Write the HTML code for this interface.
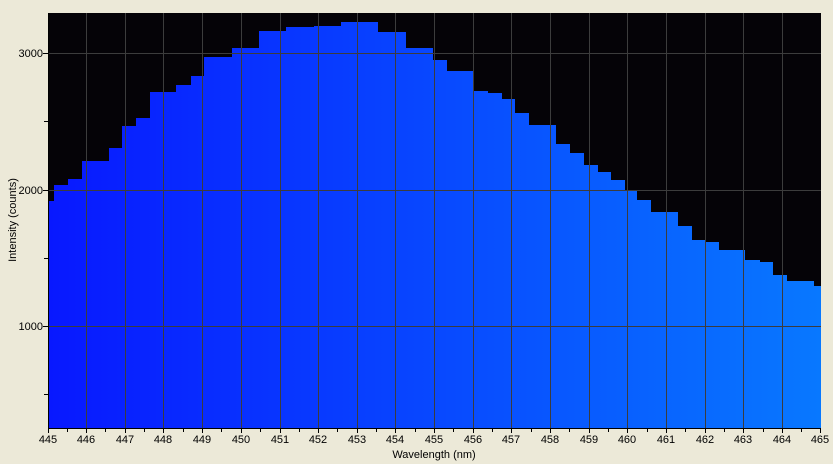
<!DOCTYPE html>
<html><head><style>
html,body{margin:0;padding:0;background:#ece9d8;}
svg{display:block}
text{font-family:"Liberation Sans",sans-serif;font-size:11px;fill:#000}
</style></head><body>
<svg width="833" height="464" viewBox="0 0 833 464" xmlns="http://www.w3.org/2000/svg">
<defs>
<linearGradient id="g" x1="48" y1="0" x2="821" y2="0" gradientUnits="userSpaceOnUse">
<stop offset="0" stop-color="#0818ff"/>
<stop offset="0.5" stop-color="#0848ff"/>
<stop offset="1" stop-color="#0878ff"/>
</linearGradient>
</defs>
<rect x="48" y="13" width="773" height="415" fill="#050307"/>
<path fill="url(#g)" d="M48 428 V201 H54 V185 H68 V179 H82 V161 H109 V148 H122 V126 H136 V118 H150 V92 H176 V85 H191 V76 H204 V57 H232 V48 H259 V31 H286 V27 H314 V26 H341 V22 H378 V32 H406 V48 H433 V60 H447 V71 H473 V91 H488 V93 H502 V99 H515 V113 H529 V125 H556 V144 H570 V153 H584 V165 H598 V172 H611 V180 H625 V190 H637 V200 H651 V212 H678 V226 H692 V240 H706 V242 H719 V250 H745 V260 H760 V262 H773 V275 H787 V281 H814 V286 H821 V428 Z"/>
<g stroke="#3c3c3c" stroke-width="1">
<path d="M86.5 13V428M125.5 13V428M163.5 13V428M202.5 13V428M241.5 13V428M280.5 13V428M318.5 13V428M357.5 13V428M395.5 13V428M434.5 13V428M473.5 13V428M511.5 13V428M550.5 13V428M589.5 13V428M627.5 13V428M666.5 13V428M705.5 13V428M743.5 13V428M782.5 13V428"/>
<path d="M48 53.5H821M48 190.5H821M48 326.5H821"/>
</g>
<g stroke="#000" stroke-width="1">
<path d="M48 428.5H821M48.5 13V428"/>
<path d="M48.5 428V433M67.5 428V432M86.5 428V433M105.5 428V432M125.5 428V433M144.5 428V432M163.5 428V433M183.5 428V432M202.5 428V433M221.5 428V432M241.5 428V433M260.5 428V432M280.5 428V433M299.5 428V432M318.5 428V433M337.5 428V432M357.5 428V433M376.5 428V432M395.5 428V433M415.5 428V432M434.5 428V433M453.5 428V432M473.5 428V433M492.5 428V432M511.5 428V433M531.5 428V432M550.5 428V433M569.5 428V432M589.5 428V433M608.5 428V432M627.5 428V433M647.5 428V432M666.5 428V433M685.5 428V432M705.5 428V433M724.5 428V432M743.5 428V433M763.5 428V432M782.5 428V433M801.5 428V432M820.5 428V433"/>
<path d="M43 53.5H48M44 121.5H48M43 190.5H48M44 258.5H48M43 326.5H48M44 394.5H48"/>
</g>
<g text-anchor="middle">
<text x="48" y="443">445</text><text x="86" y="443">446</text><text x="125" y="443">447</text><text x="163" y="443">448</text><text x="202" y="443">449</text><text x="241" y="443">450</text><text x="280" y="443">451</text><text x="318" y="443">452</text><text x="357" y="443">453</text><text x="395" y="443">454</text><text x="434" y="443">455</text><text x="473" y="443">456</text><text x="511" y="443">457</text><text x="550" y="443">458</text><text x="589" y="443">459</text><text x="627" y="443">460</text><text x="666" y="443">461</text><text x="705" y="443">462</text><text x="743" y="443">463</text><text x="782" y="443">464</text><text x="820" y="443">465</text>
<text x="434" y="458" font-size="10">Wavelength (nm)</text>
<text transform="translate(16,220) rotate(-90)" font-size="10">Intensity (counts)</text>
</g>
<g text-anchor="end">
<text x="43" y="57">3000</text><text x="43" y="194">2000</text><text x="43" y="330">1000</text>
</g>
</svg>
</body></html>
